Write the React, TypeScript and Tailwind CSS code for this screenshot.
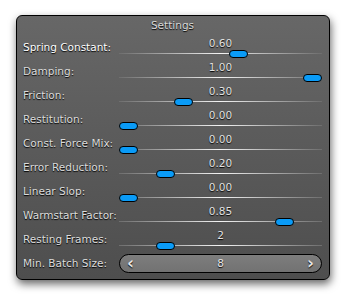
import React from 'react';

type Row = { label: string; value: number; max: number; text: string; active?: boolean };

const rows: Row[] = [
  { label: 'Spring Constant:', value: 0.6, max: 1, text: '0.60', active: true },
  { label: 'Damping:', value: 1, max: 1, text: '1.00' },
  { label: 'Friction:', value: 0.3, max: 1, text: '0.30' },
  { label: 'Restitution:', value: 0, max: 1, text: '0.00' },
  { label: 'Const. Force Mix:', value: 0, max: 1, text: '0.00' },
  { label: 'Error Reduction:', value: 0.2, max: 1, text: '0.20' },
  { label: 'Linear Slop:', value: 0, max: 1, text: '0.00' },
  { label: 'Warmstart Factor:', value: 0.85, max: 1, text: '0.85' },
  { label: 'Resting Frames:', value: 2, max: 10, text: '2' },
];

const font = { fontFamily: '"DejaVu Sans", Verdana, sans-serif' };

const Slider: React.FC<{ row: Row }> = ({ row }) => {
  const left = (row.value / row.max) * 184;
  return (
    <div className="relative h-6 w-[203px]">
      <div className="absolute left-0 right-0 top-[2px] text-center text-[10.5px] leading-[13px] text-[#e2e2e2] [text-shadow:0_1px_1px_#000]">
        {row.text}
      </div>
      <div className="absolute left-0 right-0 top-[18px] h-px bg-gradient-to-r from-[#6e6e6e] via-[#f4f4f4] to-[#6e6e6e]" />
      <div
        className="absolute top-[15px] h-[8px] w-[19px] rounded-full border border-black bg-[#0a9bf7]"
        style={{ left }}
      />
    </div>
  );
};

export default function App() {
  return (
    <div className="h-[296px] w-[345px] bg-white pl-4 pt-[15px]" style={font}>
      <div className="flex h-[265px] w-[314px] flex-col rounded-[6px] border border-black bg-gradient-to-b from-[#676767] to-[#4e4e4e] pr-[7px] pl-[6px] shadow-[1px_4px_9px_rgba(0,0,0,0.6)]">
        <div className="flex h-[19px] items-center justify-center pt-[1px] text-[10.5px] text-[#d8d8d8] [text-shadow:0_1px_1px_#000]">
          Settings
        </div>
        {rows.map((r) => (
          <div key={r.label} className="flex h-6 items-center">
            <div
              className={`w-[96px] shrink-0 pt-[1px] text-[10.5px] [text-shadow:0_1px_1px_#000] ${
                r.active ? 'text-white' : 'text-[#dcdcdc]'
              }`}
            >
              {r.label}
            </div>
            <Slider row={r} />
          </div>
        ))}
        <div className="flex h-6 items-center pt-[1px]">
          <div className="w-[96px] shrink-0 text-[10.5px] text-[#dcdcdc] [text-shadow:0_1px_1px_#000]">
            Min. Batch Size:
          </div>
          <div className="flex h-[19px] w-[203px] items-center justify-between rounded-full border border-black bg-gradient-to-b from-[#7d7d7d] to-[#727272] px-[7px] text-[10.5px] text-[#e6e6e6] [text-shadow:0_1px_1px_#000]">
            <span className="text-[17px] font-bold leading-none">‹</span>
            <span>8</span>
            <span className="text-[17px] font-bold leading-none">›</span>
          </div>
        </div>
      </div>
    </div>
  );
}
